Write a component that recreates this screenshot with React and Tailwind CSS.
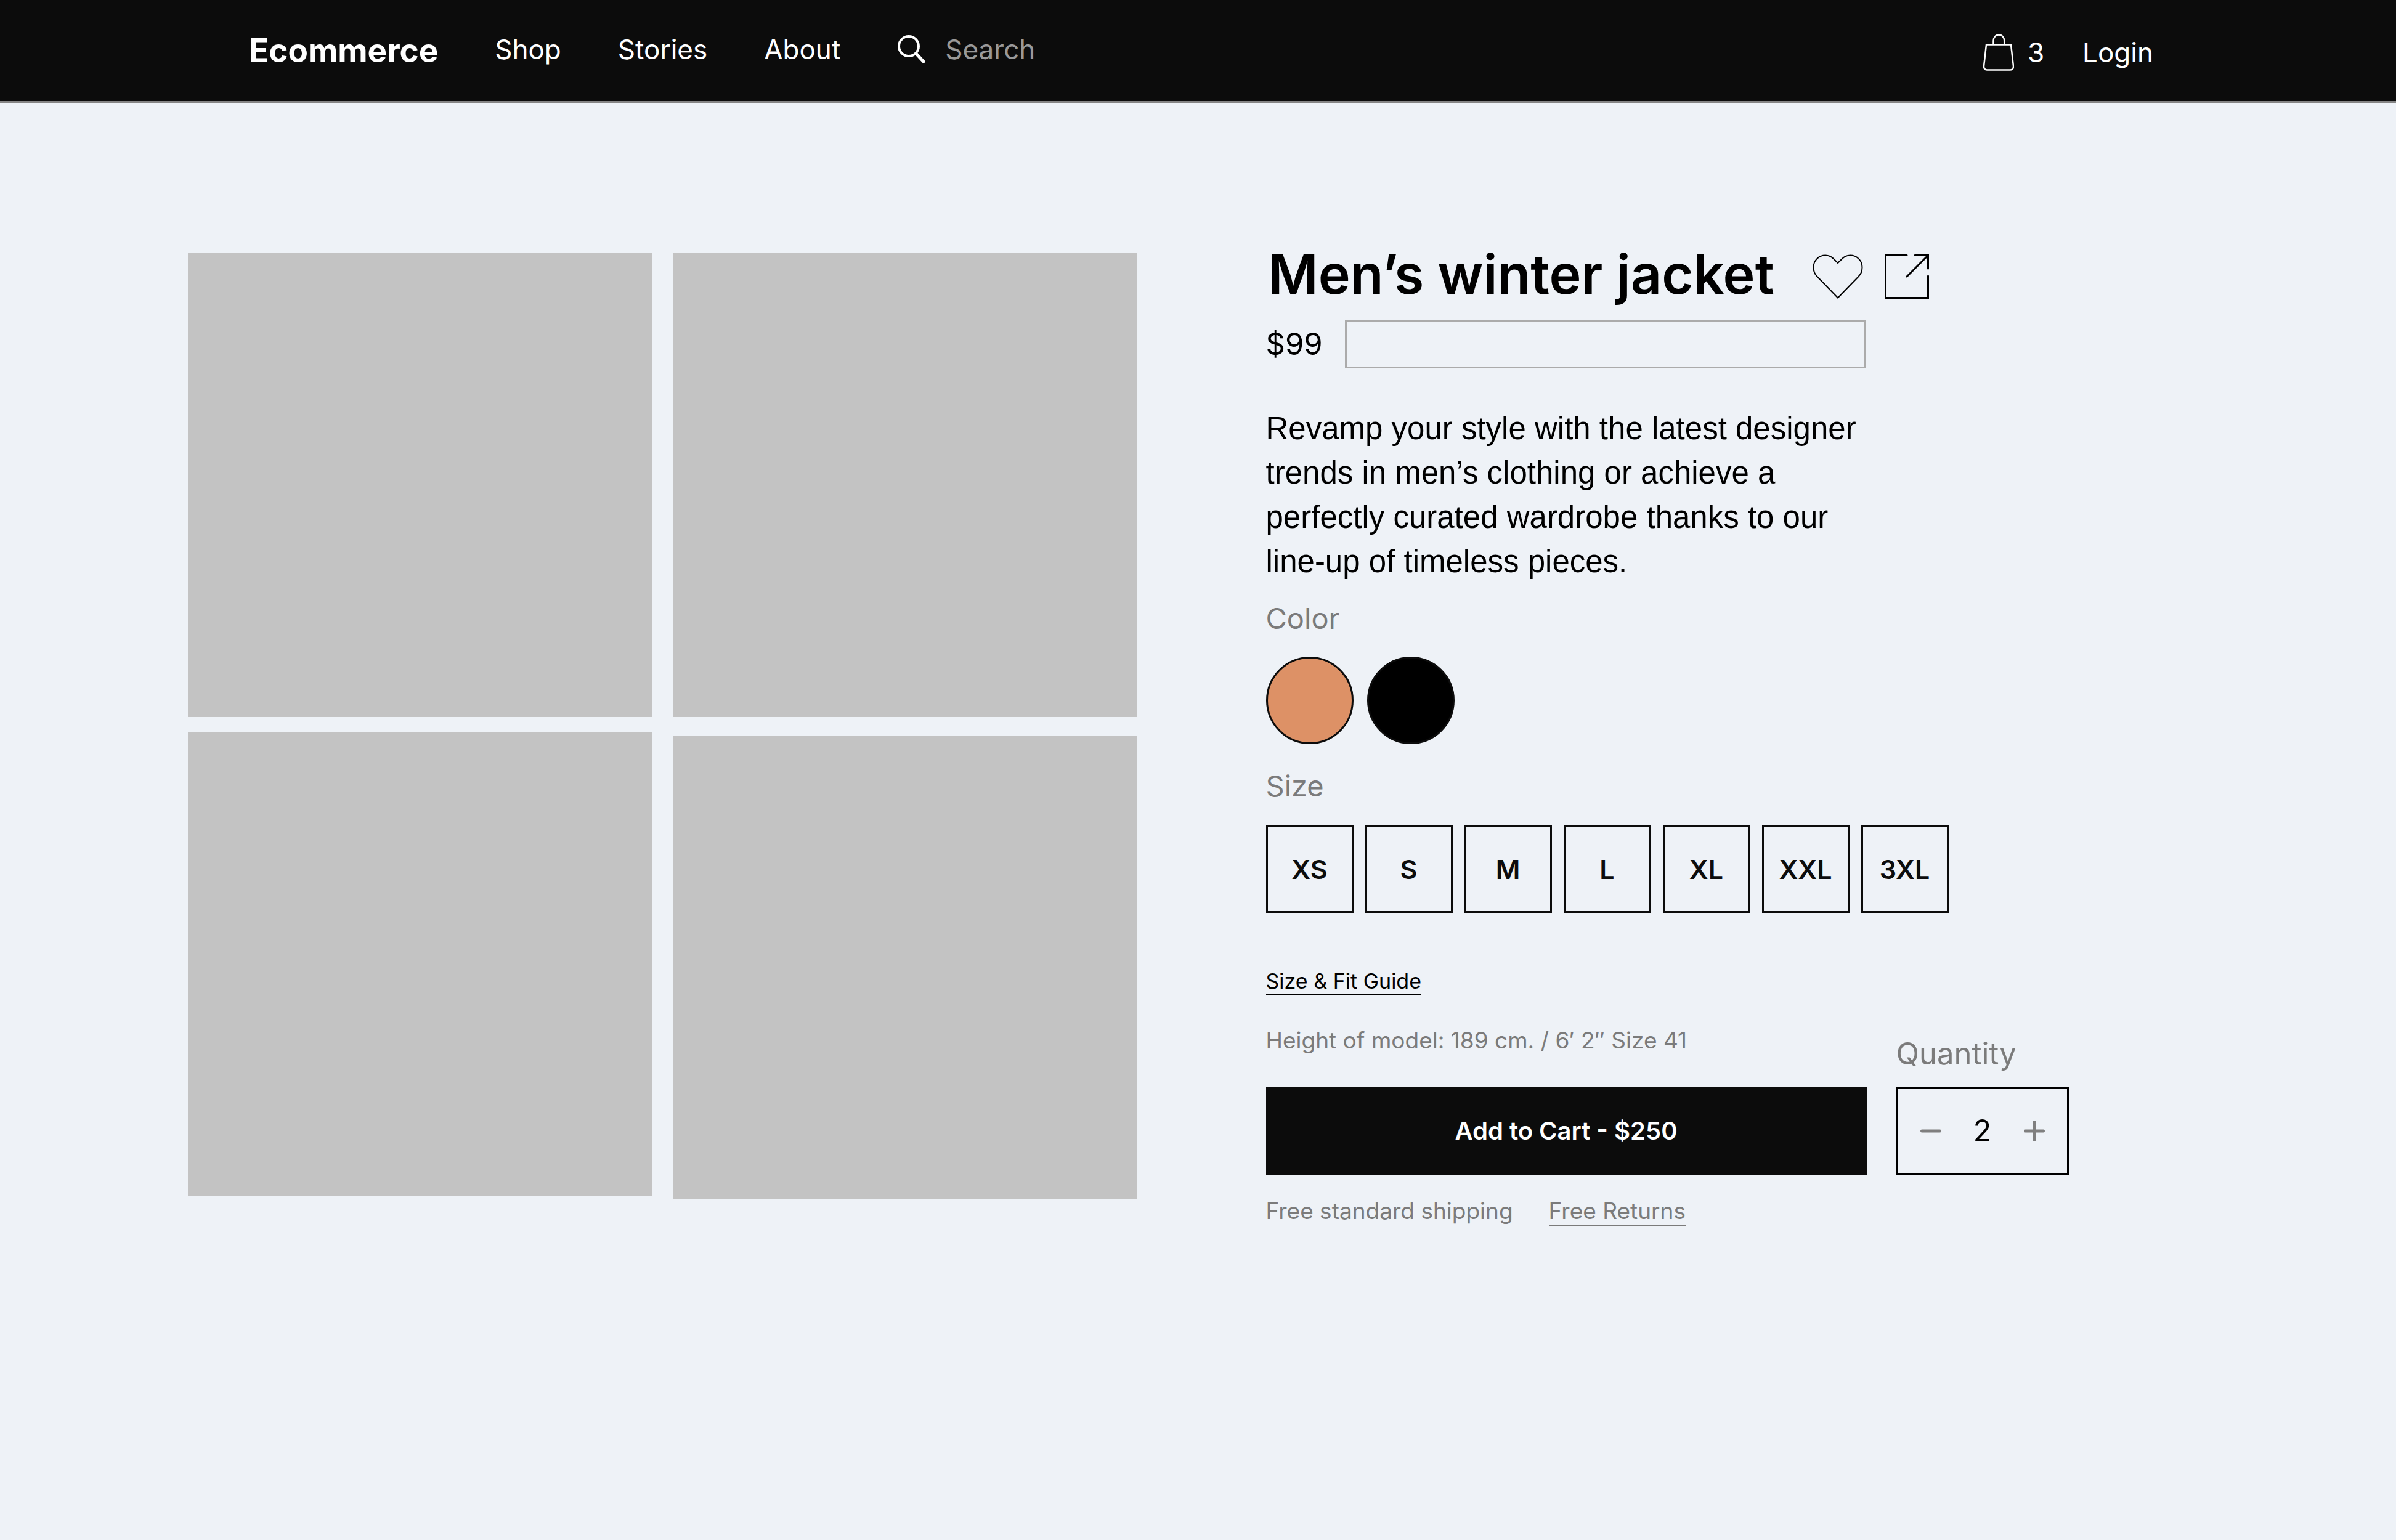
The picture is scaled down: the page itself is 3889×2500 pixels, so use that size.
const SIZES = ["XS", "S", "M", "L", "XL", "XXL", "3XL"];

const COLORS = [
  { name: "Tan", swatch: "bg-[#dd9166]" },
  { name: "Black", swatch: "bg-black" },
];

const NAV_LINKS = ["Shop", "Stories", "About"];

function SearchIcon() {
  return (
    <svg width="46" height="46" viewBox="0 0 46 46" fill="none" stroke="white" strokeWidth="4" strokeLinecap="round" aria-hidden="true">
      <circle cx="19" cy="18" r="16" />
      <path d="M31 30L43 43" strokeWidth="5" />
    </svg>
  );
}

function BagIcon() {
  return (
    <svg width="50" height="60" viewBox="0 0 50 60" fill="none" stroke="white" strokeWidth="2.500" aria-hidden="true">
      <path d="M5 17.500H45L49 52.500Q49 58.500 43.500 58.500H6.500Q1 58.500 1 52.500Z" />
      <path d="M16.500 17V11A8.800 9.500 0 0 1 34.200 11V17" />
    </svg>
  );
}

function HeartIcon() {
  return (
    <svg width="82" height="72" viewBox="0 0 82 72" fill="none" stroke="black" strokeWidth="2" aria-hidden="true">
      <path d="M41 14L34.500 7.500C30.500 3.500 26 1.500 21 1.500C10 1.500 1.500 10 1.500 21C1.500 27 3.500 32 7.500 36L41 70.500L74.500 36C78.500 32 80.500 27 80.500 21C80.500 10 72 1.500 61 1.500C56 1.500 51.500 3.500 47.500 7.500Z" />
    </svg>
  );
}

function ShareIcon() {
  return (
    <svg width="72" height="72" viewBox="0 0 72 72" fill="none" stroke="black" strokeWidth="3" strokeLinecap="round" aria-hidden="true">
      <path d="M36 1.500H1.500V70.500H70.500V35" />
      <path d="M49 1.500H70.500V23" />
      <path d="M70.500 1.500L36 36" />
    </svg>
  );
}

function Header() {
  return (
    <header className="flex h-[167px] items-center justify-between border-b-[3px] border-[#858585] bg-[#0c0c0c] pl-[404px] pr-[394px] text-[44px] leading-[56px] text-white">
      <div className="flex items-center gap-[92px]">
        <a href="#home" className="text-[53px] font-bold">Ecommerce</a>
        <nav className="flex gap-[92px] pb-1">
          {NAV_LINKS.map((label) => (
            <a key={label} href={`#${label.toLowerCase()}`}>{label}</a>
          ))}
        </nav>
        <label className="flex items-center gap-8 pb-1">
          <SearchIcon />
          <input type="search" aria-label="Search" placeholder="Search" className="w-[400px] bg-transparent outline-none placeholder:text-[#999999]" />
        </label>
      </div>
      <div className="flex items-center gap-[62px] pt-1.5">
        <button type="button" aria-label="Cart, 3 items" className="flex items-center gap-[22px]">
          <BagIcon />
          3
        </button>
        <a href="#login">Login</a>
      </div>
    </header>
  );
}

function Gallery() {
  return (
    <div className="flex flex-1 gap-[34px]">
      <div className="flex flex-1 flex-col gap-[25px]">
        <div className="aspect-square bg-[#c3c3c3]" />
        <div className="aspect-square bg-[#c3c3c3]" />
      </div>
      <div className="flex flex-1 flex-col gap-[30px]">
        <div className="aspect-square bg-[#c3c3c3]" />
        <div className="aspect-square bg-[#c3c3c3]" />
      </div>
    </div>
  );
}

function Details() {
  return (
    <section className="-mt-3 flex-1">
      <div className="flex items-center pl-1">
        <h1 className="text-[88px] font-semibold leading-[92px]">Men’s winter jacket</h1>
        <div className="ml-[62px] flex gap-[35px] pt-2">
          <button type="button" aria-label="Save to favourites"><HeartIcon /></button>
          <button type="button" aria-label="Share"><ShareIcon /></button>
        </div>
      </div>

      <div className="mt-7 flex w-[974px] items-center gap-9">
        <span className="text-[49px] leading-[56px]">$99</span>
        <input type="text" aria-label="Price note" className="h-[79px] min-w-0 flex-1 border-[3px] border-[#ababab] bg-transparent px-4 text-[37px]" />
      </div>

      <p className="mt-[62px] w-[1000px] font-['Liberation_Sans',sans-serif] text-[51px] leading-[72px]">
        Revamp your style with the latest designer trends in men’s clothing or achieve a perfectly curated wardrobe thanks to our line-up of timeless pieces.
      </p>

      <fieldset className="mt-7">
        <legend className="text-[47px] leading-[56px] text-[#7b7b7b]">Color</legend>
        <div className="mt-[34px] flex gap-[22px]">
          {COLORS.map((c) => (
            <input key={c.name} type="radio" name="color" aria-label={c.name} className={`size-[142px] appearance-none rounded-full border-[3px] border-[#0c0c0c] ${c.swatch}`} />
          ))}
        </div>
      </fieldset>

      <h2 className="mt-10 text-[47px] leading-[56px] text-[#7b7b7b]">Size</h2>
      <div className="mt-9 flex gap-[19px]">
        {SIZES.map((s) => (
          <button key={s} type="button" className="size-[142px] border-[3px] border-[#0c0c0c] text-[43px] font-semibold text-[#0c0c0c]">{s}</button>
        ))}
      </div>

      <div className="mt-[91px] flex gap-12">
        <div className="w-[975px]">
          <a href="#size-guide" className="block w-max border-b-[3px] border-black text-[34px] leading-[40px]">Size &amp; Fit Guide</a>
          <p className="mt-[49px] text-[37px] leading-[48px] text-[#7b7b7b]">Height of model: 189 cm. / 6′ 2″ Size 41</p>
          <button type="button" className="mt-[52px] h-[142px] w-full bg-[#0c0c0c] text-[40px] font-semibold text-white">Add to Cart - $250</button>
        </div>
        <div className="flex flex-col justify-end">
          <label htmlFor="quantity" className="text-[49px] leading-[56px] text-[#7b7b7b]">Quantity</label>
          <div className="mt-[26px] flex h-[142px] w-[280px] items-center justify-between border-[3px] border-black px-9">
            <button type="button" aria-label="Decrease quantity">
              <svg width="34" height="34" viewBox="0 0 34 34" stroke="#7f7f7f" strokeWidth="5" strokeLinecap="round" aria-hidden="true">
                <path d="M2.500 17H31.500" />
              </svg>
            </button>
            <input id="quantity" type="text" defaultValue="2" className="w-16 bg-transparent text-center text-[49px] leading-[56px] outline-none" />
            <button type="button" aria-label="Increase quantity">
              <svg width="34" height="34" viewBox="0 0 34 34" stroke="#7f7f7f" strokeWidth="5" strokeLinecap="round" aria-hidden="true">
                <path d="M2.500 17H31.500M17 2.500V31.500" />
              </svg>
            </button>
          </div>
        </div>
      </div>

      <div className="mt-[37px] flex items-start gap-[58px] text-[37px] leading-[44px] text-[#7b7b7b]">
        <p>Free standard shipping</p>
        <a href="#returns" className="border-b-[3px] border-[#7b7b7b]">Free Returns</a>
      </div>
    </section>
  );
}

export default function App() {
  return (
    <div className="min-h-screen bg-[#eef2f7] font-[Inter,sans-serif] text-black">
      <Header />
      <main className="flex items-start gap-[210px] pl-[305px] pr-[295px] pt-[244px]">
        <Gallery />
        <Details />
      </main>
    </div>
  );
}
